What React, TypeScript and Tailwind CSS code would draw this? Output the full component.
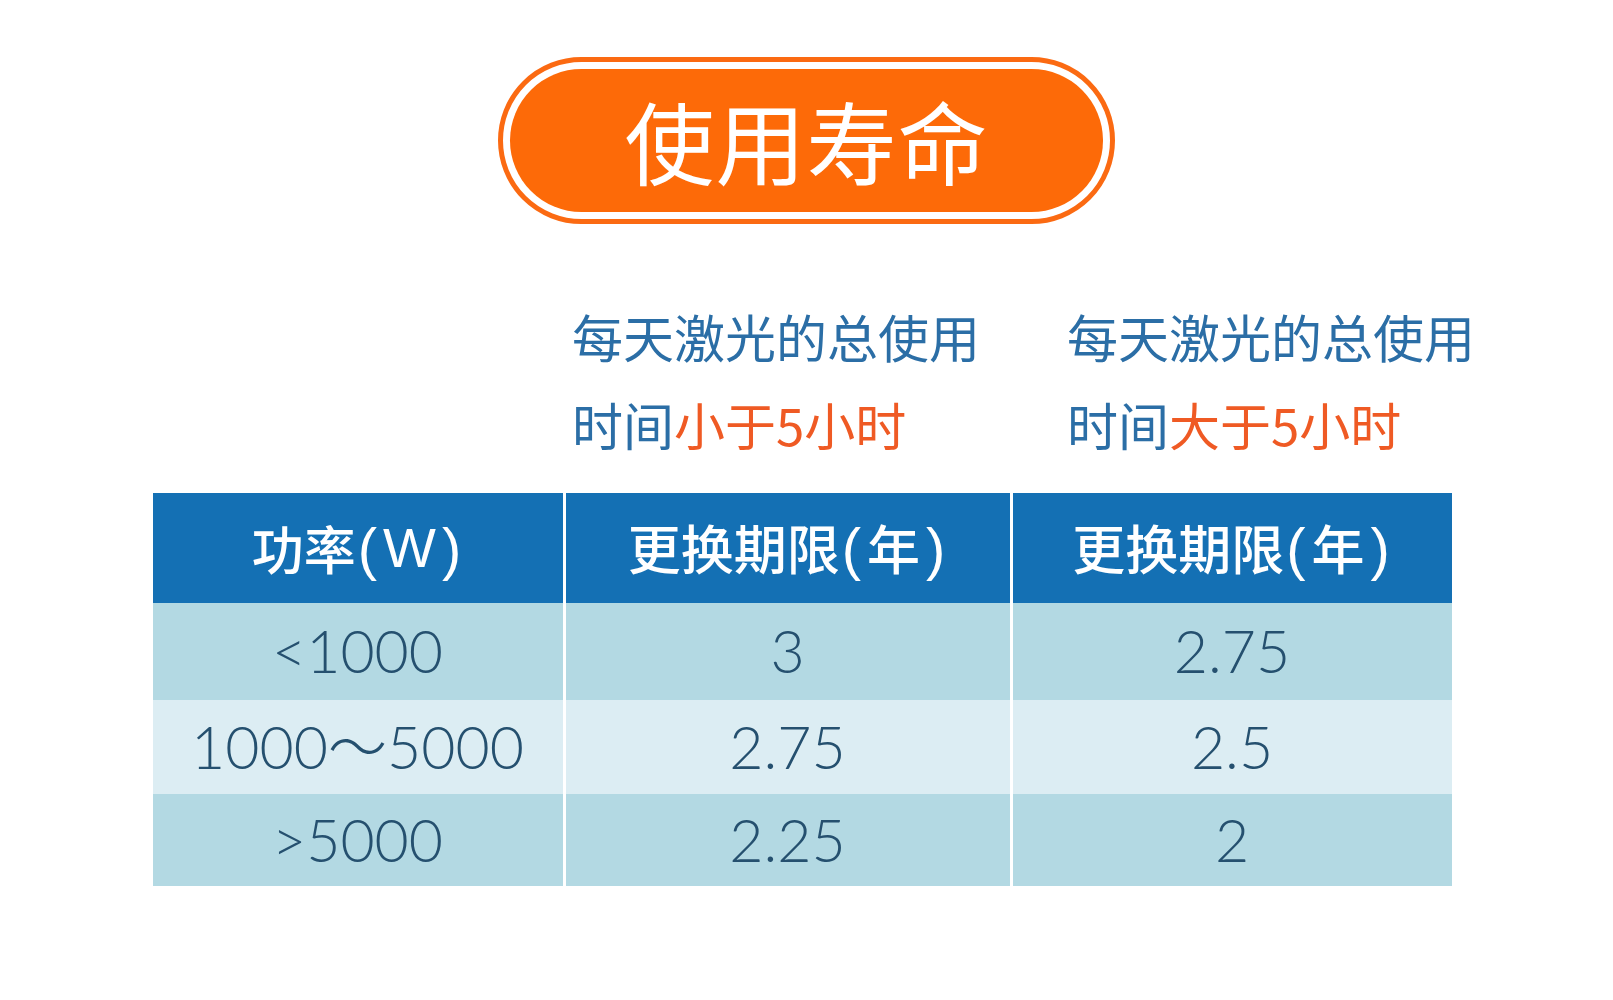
const cjk = { fontFamily: '"Noto Sans CJK SC", "Noto Sans", sans-serif' };
const num = { fontFamily: 'Lato, "Noto Sans CJK SC", sans-serif' };
const latin = { fontFamily: '"Liberation Sans", "Noto Sans CJK SC", sans-serif' };

const rows = [
  { p: "<1000", a: "3", b: "2.75", bg: "bg-[#b3d9e3]", h: "h-[97px]" },
  { p: "1000～5000", a: "2.75", b: "2.5", bg: "bg-[#dcedf3]", h: "h-[94px]" },
  { p: ">5000", a: "2.25", b: "2", bg: "bg-[#b3d9e3]", h: "h-[92px]" },
];

function Cell({ children, className = "" }: { children: React.ReactNode; className?: string }) {
  return <div className={`flex items-center justify-center whitespace-nowrap ${className}`}>{children}</div>;
}

function Paren({ ch }: { ch: string }) {
  return (
    <span className={`${ch === "(" ? "pl-[2px] pr-[6px]" : "pl-[6px] pr-[2px]"} text-[58px] font-normal`} style={latin}>
      {ch}
    </span>
  );
}

export default function App() {
  return (
    <div className="w-[1613px] h-[1000px] bg-white flex flex-col items-center" style={cjk}>
      {/* title pill */}
      <div className="mt-[57px] w-[617px] h-[167px] rounded-full border-[5px] border-[#fb6a12] bg-white p-[7px]">
        <div className="h-full w-full rounded-full bg-[#fd6a08] flex items-center justify-center">
          <span className="text-white text-[90px] leading-none font-normal tracking-[1px] -mt-[4px]">使用寿命</span>
        </div>
      </div>

      {/* subtitles */}
      <div className="mt-[68px] mr-[10px] grid grid-cols-[412px_447px_440px] text-[51px] leading-[88px] text-[#2b6ea6] whitespace-nowrap">
        <div />
        <div className="pl-[8px]">
          <div>每天激光的总使用</div>
          <div>
            时间<span className="text-[#ef5a24]">小于5小时</span>
          </div>
        </div>
        <div className="pl-[56px]">
          <div>每天激光的总使用</div>
          <div>
            时间<span className="text-[#ef5a24]">大于5小时</span>
          </div>
        </div>
      </div>

      {/* table */}
      <div className="mt-[25px] mr-[9px] grid grid-cols-[410px_444px_439px] gap-x-[3px] bg-white">
        <Cell className="h-[110px] bg-[#1470b4] text-white text-[52px] font-medium">
          功率<Paren ch="(" />
          <span className="text-[56px] font-normal" style={latin}>W</span>
          <Paren ch=")" />
        </Cell>
        <Cell className="h-[110px] bg-[#1470b4] text-white text-[53px] font-medium">
          更换期限<Paren ch="(" />年<Paren ch=")" />
        </Cell>
        <Cell className="h-[110px] bg-[#1470b4] text-white text-[53px] font-medium">
          更换期限<Paren ch="(" />年<Paren ch=")" />
        </Cell>
        {rows.map((r, i) => (
          <div key={i} className="contents">
            <Cell className={`${r.h} ${r.bg} text-[#25506f] text-[59px] font-light`}>
              <span style={num}>{r.p}</span>
            </Cell>
            <Cell className={`${r.bg} text-[#25506f] text-[59px] font-light`}>
              <span style={num}>{r.a}</span>
            </Cell>
            <Cell className={`${r.bg} text-[#25506f] text-[59px] font-light`}>
              <span style={num}>{r.b}</span>
            </Cell>
          </div>
        ))}
      </div>
    </div>
  );
}
